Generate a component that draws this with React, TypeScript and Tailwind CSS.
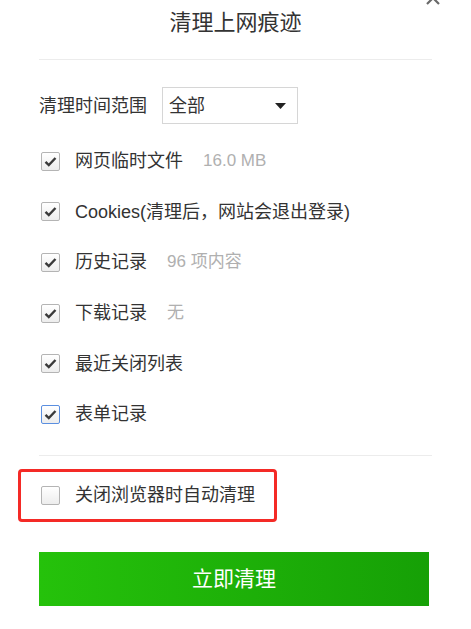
import { useState } from "react";

type Item = { label: string; extra?: string; checked: boolean; focus?: boolean };

const items: Item[] = [
  { label: "网页临时文件", extra: "16.0 MB", checked: true },
  { label: "Cookies(清理后，网站会退出登录)", checked: true },
  { label: "历史记录", extra: "96 项内容", checked: true },
  { label: "下载记录", extra: "无", checked: true },
  { label: "最近关闭列表", checked: true },
  { label: "表单记录", checked: true, focus: true },
];

// Small square checkbox like the old IE/QQ browser style
function Box({ checked, focus }: { checked: boolean; focus?: boolean }) {
  return (
    <span
      className={
        "flex h-[19px] w-[19px] shrink-0 items-center justify-center rounded-[2px] border bg-gradient-to-b from-white to-[#ededed] " +
        (focus ? "border-[#5b8fe0]" : "border-[#b4b4b4]")
      }
    >
      {checked && (
        <svg width="13" height="11" viewBox="0 0 13 11">
          <path d="M1.5 5.8 L4.8 9 L11.5 2" fill="none" stroke="#3a3a3a" strokeWidth="2.4" />
        </svg>
      )}
    </span>
  );
}

export default function App() {
  const [list, setList] = useState(items);
  const [autoClean, setAutoClean] = useState(false);

  return (
    <div
      className="relative h-[629px] w-[471px] overflow-hidden bg-white px-[39px] text-[#333]"
      style={{ fontFamily: '"Liberation Sans", "Noto Sans CJK SC", sans-serif' }}
    >
      <button className="absolute right-[31px] top-[-9px] text-[#666]">
        <svg width="14" height="14" viewBox="0 0 14 14">
          <path d="M1 1 L13 13 M13 1 L1 13" stroke="#6a6a6a" strokeWidth="2.2" />
        </svg>
      </button>

      <h1 className="pt-[8px] text-center text-[22px] leading-[30px]">清理上网痕迹</h1>
      <div className="mt-[21px] border-t border-[#ececec]" />

      <div className="mt-[27px] flex items-center">
        <span className="w-[123px] text-[18px] leading-[24px]">清理时间范围</span>
        <div className="flex h-[37px] w-[136px] items-center justify-between border border-[#d6d6d6] pl-[6px] pr-[11px]">
          <span className="text-[18px] leading-[24px]">全部</span>
          <svg width="11" height="6" viewBox="0 0 11 6">
            <path d="M0 0 L11 0 L5.5 6 Z" fill="#222" />
          </svg>
        </div>
      </div>

      <div className="mt-[12px]">
        {list.map((it, i) => (
          <label
            key={it.label}
            className="flex h-[50.6px] cursor-pointer items-center pl-[2px]"
            onClick={() =>
              setList(list.map((x, j) => (j === i ? { ...x, checked: !x.checked } : x)))
            }
          >
            <Box checked={it.checked} focus={it.focus} />
            <span className="ml-[15px] text-[18px] leading-[24px]">{it.label}</span>
            {it.extra && (
              <span className="ml-[20px] text-[17px] leading-[24px] text-[#b0b0b0]">{it.extra}</span>
            )}
          </label>
        ))}
      </div>

      <div className="mt-[15px] border-t border-[#ececec]" />

      <div
        className="-ml-[21px] mt-[13px] flex h-[53px] w-[259px] cursor-pointer items-center rounded-[4px] border-[3px] border-[#f42a26] pl-[20px]"
        onClick={() => setAutoClean(!autoClean)}
      >
        <Box checked={autoClean} />
        <span className="ml-[15px] text-[18px] leading-[24px]">关闭浏览器时自动清理</span>
      </div>

      <button className="mt-[30px] flex h-[54px] w-[390px] items-center justify-center bg-gradient-to-r from-[#25c20b] to-[#16a006] text-[21px] text-white">
        立即清理
      </button>
    </div>
  );
}
